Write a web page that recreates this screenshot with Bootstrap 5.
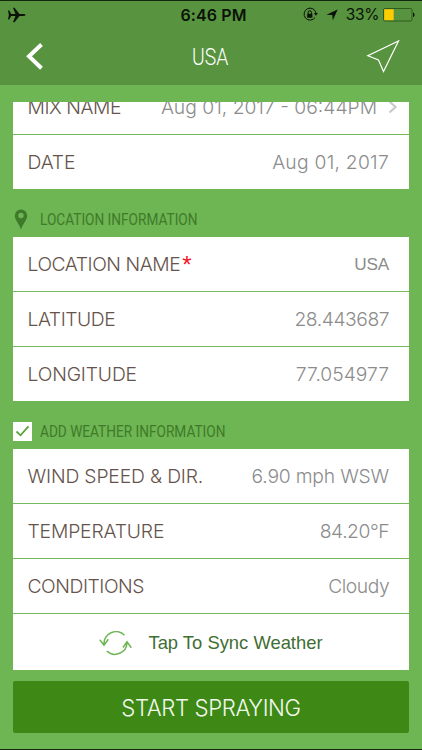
<!DOCTYPE html>
<html lang="en">
<head>
  <meta charset="UTF-8">
  <title>USA</title>
  <meta name="viewport" content="width=device-width, initial-scale=1.0">

  <!-- Bootstrap 5 CDN -->
  <link href="https://cdn.jsdelivr.net/npm/bootstrap@5.3.3/dist/css/bootstrap.min.css" rel="stylesheet">
  <style>
    body {
      background: #6eb553;
      font-family: Inter, "Liberation Sans", sans-serif;
      font-weight: 300;
      line-height: 1;
    }
    svg { display: block; flex: none; }
    .phone { width: 422px; height: 750px; overflow: hidden; border-top: 1px solid #16270f; border-bottom: 1px solid #16270f; }

    /* header */
    .app-top { background: #58933f; height: 84px; }
    .side { flex: 1 1 0; }
    .status { height: 27px; color: #0b1207; padding: 0 7px 0 8px; }
    .status .clock { font-size: 16px; font-weight: 600; letter-spacing: .1px; padding-left: 4px; }
    .status .level { font-size: 15.5px; font-weight: 400; letter-spacing: -.35px; margin: 0 4px 0 8px; }
    .title-row { height: 57px; padding: 1px 22px 0 26px; color: #fff; }
    .slim { display: inline-block; white-space: nowrap; transform-origin: 0 50%; font-family: Roboto, "Liberation Sans", sans-serif; }
    .title-row .slim { font-size: 24.5px; font-weight: 300; width: 41px; transform: scaleX(.79); }
    .title-row .side:first-child { margin-right: -2px; }

    /* form */
    .content { padding: 17px 13px 0; }
    .panel { background: #fff; }
    .item { height: 54px; padding: 1px 20px 0 14.5px; font-size: 19.3px; }
    .item + .item, .cut + .item { border-top: 1px solid #77b85f; height: 55px; }
    .item .name { color: #65534c; letter-spacing: -.15px; }
    .item .value { color: #8c8c8c; }
    .item .name.tight { letter-spacing: -.45px; }
    .item .value.tight { letter-spacing: -.45px; margin-right: -.2px; }
    .item .value.snug { letter-spacing: -.2px; }
    .item .value.open { letter-spacing: .25px; }
    .item .value.plain { font: 400 17.2px "Liberation Sans", sans-serif; letter-spacing: -.2px; }
    .cut { height: 32px; overflow: hidden; }
    .star { color: #f5121c; font: 400 24px "Liberation Sans", sans-serif; line-height: 1; margin-left: 2px; }
    .item + .item.sync { height: 57px; padding-left: 20px; color: #3f6e33; font: 400 18.4px "Liberation Sans", sans-serif; }
    .section { height: 48px; padding-top: 13px; color: #3f7a2a; font-size: 17px; }
    .section .slim { font-weight: 400; transform: scaleX(.803); }
    .section .lead-icon { width: 26.5px; }
    .start { height: 52px; padding-top: 3px; background: #3e8816; color: #f1f8ec; font-size: 22.2px; font-weight: 300; letter-spacing: -.4px; border: 0; border-radius: 2px; margin-top: 11px; }
  </style>
</head>
<body>

  <div class="phone">
    <header class="app-top">
      <div class="status d-flex align-items-center">
        <div class="side">
          <svg width="18" height="16" viewBox="0 0 18 16"><path d="M0 3.500h1.200l2 3.600h4.300L5 .800h1.500l5 6.300h4c1.200 0 2 .400 2 .900s-.800.900-2 .900h-4l-5 6.300H5l2.500-6.300H3.200l-2 3.600H0l.900-4.500z" fill="currentColor"/></svg>
        </div>
        <span class="clock">6:46 PM</span>
        <div class="side d-flex align-items-center justify-content-end">
          <svg width="15" height="15" viewBox="0 0 15 15"><path d="M12 10.600A6 6 0 1 1 13 6" fill="none" stroke="currentColor" stroke-width="1"/><path d="M10.900 6h4l-2 2.700zM4.200 6.700h5.200v4H4.200z" fill="currentColor"/><path d="M5.200 7V5.300a1.600 1.600 0 0 1 3.200 0V7" fill="none" stroke="currentColor"/></svg>
          <svg class="ms-2" width="12" height="12" viewBox="0 0 12 12"><path d="M11.700.500 6.800 11.200 6.300 6 .400 5.700z" fill="currentColor"/></svg>
          <span class="level">33%</span>
          <svg width="32" height="14" viewBox="0 0 32 14"><rect x=".5" y=".5" width="28.500" height="12.500" rx="1.500" fill="none" stroke="#2f5a1f"/><path d="M1.200 1.200h9.500v11H1.200z" fill="#fc0"/><path d="M30 4.500c2 .5 2 4 0 4.500z" fill="currentColor"/></svg>
        </div>
      </div>
      <div class="title-row d-flex align-items-center">
        <div class="side">
          <svg width="18" height="28" viewBox="0 0 18 28"><path d="M15.500 1.500 3 13.300l12.500 12" fill="none" stroke="#fff" stroke-width="4"/></svg>
        </div>
        <span class="slim">USA</span>
        <div class="side d-flex justify-content-end">
          <svg width="34" height="34" viewBox="0 0 34 34"><path d="M32.500 1 17.500 31.500l-5-11.500L1.800 15.800z" fill="none" stroke="#fff" stroke-width="1.200"/></svg>
        </div>
      </div>
    </header>

    <main class="content">
      <div class="panel">
        <!-- first row is scrolled half way under the header -->
        <div class="cut d-flex align-items-end">
          <div class="item w-100 flex-shrink-0 d-flex align-items-center justify-content-between pe-2">
            <span class="name tight">MIX NAME</span>
            <span class="value d-flex align-items-center">Aug 01, 2017 - 06:44PM
              <svg class="ms-2" width="16" height="14" viewBox="0 0 16 14"><path d="m4.500 1.500 6 5.500-6 5.500" fill="none" stroke="#c9c9c9" stroke-width="2.200"/></svg>
            </span>
          </div>
        </div>
        <div class="item d-flex align-items-center justify-content-between">
          <span class="name">DATE</span><span class="value open">Aug 01, 2017</span>
        </div>
      </div>

      <div class="section d-flex align-items-center">
        <div class="lead-icon">
          <svg width="15" height="21" viewBox="-1 0 15 21"><path d="M7 .500A6.200 6.200 0 0 0 .800 6.700C.800 11 4.800 14 7 20.500 9.200 14 13.200 11 13.200 6.700A6.200 6.200 0 0 0 7 .500zm0 3.300a2.700 2.700 0 1 1 0 5.400 2.700 2.700 0 0 1 0-5.400z" fill="currentColor"/></svg>
        </div>
        <span class="slim">LOCATION INFORMATION</span>
      </div>
      <div class="panel">
        <div class="item d-flex align-items-center justify-content-between">
          <span class="name tight d-flex align-items-center">LOCATION NAME<span class="star">*</span></span><span class="value plain">USA</span>
        </div>
        <div class="item d-flex align-items-center justify-content-between">
          <span class="name tight">LATITUDE</span><span class="value tight">28.443687</span>
        </div>
        <div class="item d-flex align-items-center justify-content-between">
          <span class="name">LONGITUDE</span><span class="value">77.054977</span>
        </div>
      </div>

      <div class="section d-flex align-items-center">
        <div class="lead-icon">
          <svg width="19" height="19" viewBox="0 0 19 19"><path d="M0 0h19v19H0z" fill="#fff"/><path d="m3.500 9.500 4 3.800 8-9" fill="none" stroke="#58a53c" stroke-width="1.800"/></svg>
        </div>
        <span class="slim">ADD WEATHER INFORMATION</span>
      </div>
      <div class="panel">
        <div class="item d-flex align-items-center justify-content-between">
          <span class="name">WIND SPEED &amp; DIR.</span><span class="value snug">6.90 mph WSW</span>
        </div>
        <div class="item d-flex align-items-center justify-content-between">
          <span class="name">TEMPERATURE</span><span class="value tight">84.20°F</span>
        </div>
        <div class="item d-flex align-items-center justify-content-between">
          <span class="name tight">CONDITIONS</span><span class="value tight">Cloudy</span>
        </div>
        <div class="item sync d-flex align-items-center justify-content-center">
          <svg class="me-3" width="33" height="26" viewBox="0 0 33 26" fill="none" stroke="#6eb553" stroke-width="1.500"><path d="M25.500 5.200A12 12 0 0 0 5 14.500M.800 9.800 5 15.300 9.300 9.300M7.800 21a12 12 0 0 0 20.200-8.500M24 17.500l4-5.700 4.300 6"/></svg>
          Tap To Sync Weather
        </div>
      </div>

      <button class="start w-100">START SPRAYING</button>
    </main>
  </div>

  <script src="https://cdn.jsdelivr.net/npm/bootstrap@5.3.3/dist/js/bootstrap.bundle.min.js"></script>
</body>
</html>
